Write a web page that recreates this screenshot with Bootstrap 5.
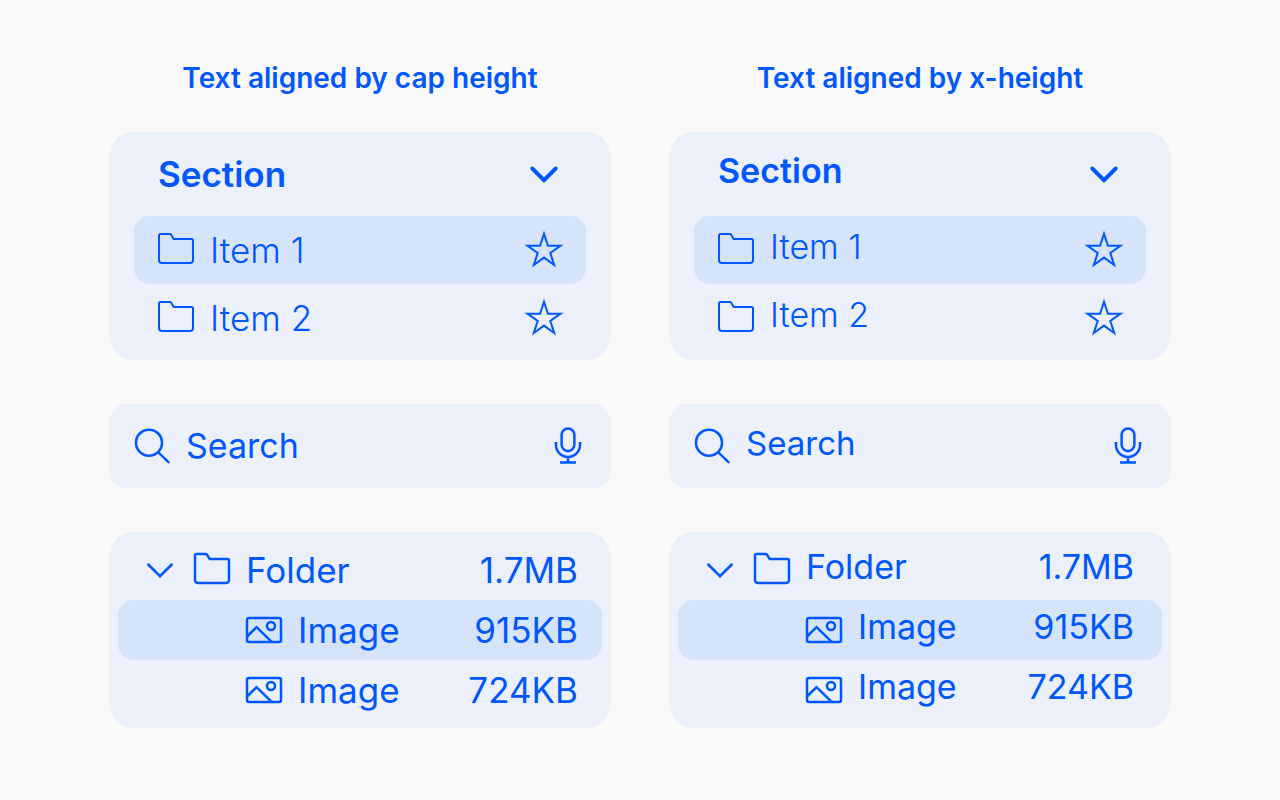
<!DOCTYPE html>
<html lang="en">
<head>
<meta charset="utf-8">
<meta name="viewport" content="width=device-width, initial-scale=1">
<title>Text alignment</title>
<link href="https://cdn.jsdelivr.net/npm/bootstrap@5.3.0/dist/css/bootstrap.min.css" rel="stylesheet">
<style>
  body { background: #f9f9f9; color: #0057ff; font-family: Inter, "Liberation Sans", sans-serif; font-size: 35px; line-height: 40px; }
  .board { max-width: 1060px; padding: 60px 0; column-gap: 60px; }
  .demo { flex: 1 1 440px; min-width: 0; }
  .demo-title { font-size: 28px; line-height: 36px; font-weight: 600; margin-bottom: 36px; }
  .panel { background: #ebf0fb; border-radius: 24px; margin-bottom: 44px; }
  .panel:last-child { margin-bottom: 0; }
  .menu-panel { padding: 0 24px 8px; }
  .menu-head { height: 84px; padding: 0 22px 0 24px; }
  .menu-head h2 { font-size: inherit; line-height: inherit; font-weight: 600; }
  .menu-row { height: 68px; padding: 0 22px; font-weight: 300; }
  .search-panel { height: 84px; padding: 0 22px; border-radius: 16px; }
  .tree-panel { padding: 8px; }
  .tree-row { height: 60px; padding: 0 24px 0 22px; }
  .tree-child { padding-left: 126px; }
  .picked { background: #d6e4fb; border-radius: 16px; }
  .row-line { display: flex; align-items: center; gap: 12px; }
  .ico + .txt { padding-left: 2px; }
  .tool { border: 0; padding: 0; background: none; color: inherit; display: block; flex: none; }
  .ico { display: block; width: 40px; height: 40px; flex: none; fill: none; stroke: currentColor; stroke-width: 2.5; }
  .thin { stroke-width: 2; }
  .bold { stroke-width: 4; stroke-linecap: round; }
  .field { flex: 1; min-width: 0; height: 40px; border: 0; padding: 0 0 0 2px; font-size: 34px; background: none; color: inherit; outline: 0; }
  .field::placeholder { color: inherit; opacity: 1; }
  /* lifts labels so that lowercase letters sit on the icon's centre line */
  .by-x .panel { font-size: 34px; }
  .by-x .txt { padding-bottom: 6px; }
  .by-x .field { height: 46px; padding-bottom: 6px; font-size: 33px; }
  .by-x .tree-row { padding-right: 28px; }
</style>
</head>
<body>
<svg class="d-none" aria-hidden="true">
  <symbol id="folder" viewBox="0 0 40 40"><path d="M4.5 4h9.4c.5 0 .9.2 1.1.6L17.700 9h17.800a1.500 1.500 0 0 1 1.500 1.500V30a3 3 0 0 1-3 3H6a3 3 0 0 1-3-3V5.500A1.500 1.500 0 0 1 4.500 4z"/></symbol>
  <symbol id="star" viewBox="0 0 40 40"><path d="M20 3.700 23.900 15.700H36.500L26.300 23 30.200 35 20 27.600 9.800 35 13.700 23 3.500 15.700H16.100z"/></symbol>
  <symbol id="chevron" viewBox="0 0 40 40"><path d="M8.300 14.500 20 26.200 31.700 14.500"/></symbol>
  <symbol id="lens" viewBox="0 0 40 40"><circle cx="17" cy="16.700" r="13"/><path d="M26.300 26.300 36.500 36.200" stroke-linecap="round"/></symbol>
  <symbol id="mic" viewBox="0 0 40 40"><rect x="13.600" y="2.600" width="12.800" height="22.400" rx="6.400"/><path d="M8 16v3a12 12 0 0 0 24 0v-3M20 31v5.500M12 36.500h16"/></symbol>
  <symbol id="image" viewBox="0 0 40 40"><rect x="3" y="8" width="34" height="24" rx="2"/><path d="M3 26.500 12.500 17.200 28 32.200"/><circle cx="27" cy="16" r="4"/></symbol>
</svg>

<main class="board mx-auto d-flex flex-wrap">
  <section class="demo">
    <h1 class="demo-title text-center">Text aligned by cap height</h1>
    <div class="panel menu-panel">
      <div class="menu-head row-line">
        <h2 class="txt m-0 me-auto">Section</h2>
        <button class="tool" type="button" aria-label="Collapse section"><svg class="ico bold"><use href="#chevron"/></svg></button>
      </div>
      <ul class="list-unstyled m-0">
        <li class="menu-row row-line picked"><svg class="ico thin"><use href="#folder"/></svg><span class="txt me-auto">Item 1</span><button class="tool" type="button" aria-label="Star item 1"><svg class="ico thin"><use href="#star"/></svg></button></li>
        <li class="menu-row row-line"><svg class="ico thin"><use href="#folder"/></svg><span class="txt me-auto">Item 2</span><button class="tool" type="button" aria-label="Star item 2"><svg class="ico thin"><use href="#star"/></svg></button></li>
      </ul>
    </div>
    <div class="panel search-panel row-line">
      <label for="search-cap" aria-label="Search"><svg class="ico"><use href="#lens"/></svg></label>
      <input class="field" id="search-cap" type="text" placeholder="Search">
      <button class="tool" type="button" aria-label="Voice search"><svg class="ico"><use href="#mic"/></svg></button>
    </div>
    <ul class="panel tree-panel list-unstyled">
      <li class="tree-row row-line"><button class="tool" type="button" aria-label="Collapse folder"><svg class="ico" stroke-linecap="round"><use href="#chevron"/></svg></button><svg class="ico"><use href="#folder"/></svg><span class="txt me-auto">Folder</span><span class="txt">1.7MB</span></li>
      <li class="tree-row tree-child row-line picked"><svg class="ico"><use href="#image"/></svg><span class="txt me-auto">Image</span><span class="txt">915KB</span></li>
      <li class="tree-row tree-child row-line"><svg class="ico"><use href="#image"/></svg><span class="txt me-auto">Image</span><span class="txt">724KB</span></li>
    </ul>
  </section>

  <section class="demo by-x">
    <h1 class="demo-title text-center">Text aligned by x-height</h1>
    <div class="panel menu-panel">
      <div class="menu-head row-line">
        <h2 class="txt m-0 me-auto">Section</h2>
        <button class="tool" type="button" aria-label="Collapse section"><svg class="ico bold"><use href="#chevron"/></svg></button>
      </div>
      <ul class="list-unstyled m-0">
        <li class="menu-row row-line picked"><svg class="ico thin"><use href="#folder"/></svg><span class="txt me-auto">Item 1</span><button class="tool" type="button" aria-label="Star item 1"><svg class="ico thin"><use href="#star"/></svg></button></li>
        <li class="menu-row row-line"><svg class="ico thin"><use href="#folder"/></svg><span class="txt me-auto">Item 2</span><button class="tool" type="button" aria-label="Star item 2"><svg class="ico thin"><use href="#star"/></svg></button></li>
      </ul>
    </div>
    <div class="panel search-panel row-line">
      <label for="search-x" aria-label="Search"><svg class="ico"><use href="#lens"/></svg></label>
      <input class="field" id="search-x" type="text" placeholder="Search">
      <button class="tool" type="button" aria-label="Voice search"><svg class="ico"><use href="#mic"/></svg></button>
    </div>
    <ul class="panel tree-panel list-unstyled">
      <li class="tree-row row-line"><button class="tool" type="button" aria-label="Collapse folder"><svg class="ico" stroke-linecap="round"><use href="#chevron"/></svg></button><svg class="ico"><use href="#folder"/></svg><span class="txt me-auto">Folder</span><span class="txt">1.7MB</span></li>
      <li class="tree-row tree-child row-line picked"><svg class="ico"><use href="#image"/></svg><span class="txt me-auto">Image</span><span class="txt">915KB</span></li>
      <li class="tree-row tree-child row-line"><svg class="ico"><use href="#image"/></svg><span class="txt me-auto">Image</span><span class="txt">724KB</span></li>
    </ul>
  </section>
</main>
<script src="https://cdn.jsdelivr.net/npm/bootstrap@5.3.0/dist/js/bootstrap.bundle.min.js"></script>
</body>
</html>
